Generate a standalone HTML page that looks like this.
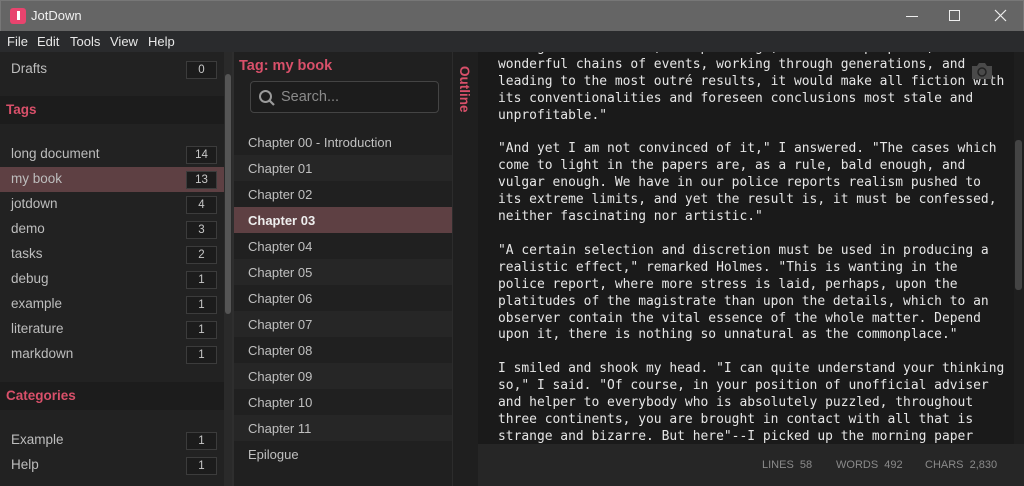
<!DOCTYPE html>
<html><head><style>
*{margin:0;padding:0;box-sizing:border-box}
body{width:1024px;height:486px;overflow:hidden;background:#1b1b1b;font-family:"Liberation Sans","DejaVu Sans",sans-serif;position:relative;color:#c8c8c8}
.abs{position:absolute}
#title{left:0;top:0;width:1024px;height:31px;background:#656565;border:1px solid #777;border-bottom:none}
#menu{left:0;top:31px;width:1024px;height:21px;background:#2a2b2d;font-size:13px;color:#e8e8e8}
#menu span{position:absolute;top:3px}
#left{left:0;top:52px;width:232px;height:434px;background:#222222}
.row{position:absolute;left:0;width:224px;height:25px;font-size:13.5px;color:#bdbdbd}
.row .t{position:absolute;left:11px;top:4px}
.row .b{position:absolute;left:186px;top:4px;width:31px;height:18px;border:1px solid #3c3c3c;background:#1c1c1c;font-size:11.5px;text-align:center;line-height:16px;color:#c8c8c8}
.hdr{position:absolute;left:0;width:224px;height:28px;background:#1c1c1c;color:#d9506a;font-weight:bold;font-size:13.5px;padding:6px 0 0 6px}
#mid{left:232px;top:52px;width:220px;height:434px;background:#202020;border-left:2px solid #2e2e2e}
.ch{position:absolute;left:0;width:218px;height:26px;font-size:13px;color:#c0c0c0;padding:6px 0 0 14px}
#outline{left:452px;top:52px;width:26px;height:434px;background:#1f1f1f;border-left:1px solid #2c2c2c}
#ed{left:478px;top:52px;width:546px;height:392px;background:#1a1a1a;overflow:hidden}
#txt{position:absolute;left:20px;top:-12px;font-family:"DejaVu Sans Mono",monospace;font-size:12.95px;line-height:16.9px;color:#e6e6e6;white-space:pre}
#status{left:478px;top:444px;width:546px;height:42px;background:#262626;font-size:11px;color:#8a8a8a}
</style></head><body>
<div id="title" class="abs">
 <div class="abs" style="left:9px;top:7px;width:16px;height:16px;background:#e8446e;border-radius:3px"><div class="abs" style="left:7px;top:3px;width:3px;height:9px;background:#fff"></div></div>
 <div class="abs" style="left:30px;top:7px;font-size:13px;color:#f0f0f0">JotDown</div>
 <div class="abs" style="left:905px;top:15px;width:12px;height:1px;background:#eee"></div>
 <div class="abs" style="left:948px;top:9px;width:11px;height:11px;border:1px solid #eee"></div>
 <svg class="abs" style="left:993px;top:8px" width="13" height="13"><path d="M1 1L12 12M12 1L1 12" stroke="#eee" stroke-width="1.2"/></svg>
</div>
<div id="menu" class="abs"><span style="left:7px">File</span><span style="left:37px">Edit</span><span style="left:70px">Tools</span><span style="left:110px">View</span><span style="left:148px">Help</span></div>
<div id="left" class="abs">
 <div class="row" style="top:5px"><span class="t">Drafts</span><span class="b">0</span></div>
 <div class="hdr" style="top:44px">Tags</div>
 <div class="row" style="top:90px"><span class="t">long document</span><span class="b">14</span></div>
 <div class="row" style="top:115px;background:#5e4043"><span class="t">my book</span><span class="b">13</span></div>
 <div class="row" style="top:140px"><span class="t">jotdown</span><span class="b">4</span></div>
 <div class="row" style="top:165px"><span class="t">demo</span><span class="b">3</span></div>
 <div class="row" style="top:190px"><span class="t">tasks</span><span class="b">2</span></div>
 <div class="row" style="top:215px"><span class="t">debug</span><span class="b">1</span></div>
 <div class="row" style="top:240px"><span class="t">example</span><span class="b">1</span></div>
 <div class="row" style="top:265px"><span class="t">literature</span><span class="b">1</span></div>
 <div class="row" style="top:290px"><span class="t">markdown</span><span class="b">1</span></div>
 <div class="hdr" style="top:330px">Categories</div>
 <div class="row" style="top:376px"><span class="t">Example</span><span class="b">1</span></div>
 <div class="row" style="top:401px"><span class="t">Help</span><span class="b">1</span></div>
 <div class="abs" style="left:224px;top:0;width:8px;height:434px;background:#2a2a2a"></div>
 <div class="abs" style="left:225px;top:22px;width:6px;height:240px;background:#555;border-radius:3px"></div>
</div>
<div id="mid" class="abs">
 <div class="abs" style="left:5px;top:6px;color:#d9506a;font-weight:bold;font-size:14.5px">Tag: my book</div>
 <div class="abs" style="left:16px;top:29px;width:189px;height:32px;border:1px solid #444;border-radius:4px;background:#1c1c1c">
  <svg class="abs" style="left:7px;top:7px" width="18" height="18"><circle cx="7.5" cy="7.5" r="5.5" stroke="#9a9a9a" stroke-width="2" fill="none"/><path d="M11.5 11.5L16 16" stroke="#9a9a9a" stroke-width="2.2"/></svg>
  <span class="abs" style="left:30px;top:7px;font-size:14.5px;color:#8a8a8a">Search...</span>
 </div>
 <div class="ch" style="top:77px">Chapter 00 - Introduction</div>
 <div class="ch" style="top:103px;background:#262626">Chapter 01</div>
 <div class="ch" style="top:129px">Chapter 02</div>
 <div class="ch" style="top:155px;background:#5e4043;color:#eee;font-weight:bold">Chapter 03</div>
 <div class="ch" style="top:181px">Chapter 04</div>
 <div class="ch" style="top:207px;background:#262626">Chapter 05</div>
 <div class="ch" style="top:233px">Chapter 06</div>
 <div class="ch" style="top:259px;background:#262626">Chapter 07</div>
 <div class="ch" style="top:285px">Chapter 08</div>
 <div class="ch" style="top:311px;background:#262626">Chapter 09</div>
 <div class="ch" style="top:337px">Chapter 10</div>
 <div class="ch" style="top:363px;background:#262626">Chapter 11</div>
 <div class="ch" style="top:389px">Epilogue</div>
</div>
<div id="outline" class="abs"><div class="abs" style="left:4px;top:14px;writing-mode:vertical-rl;color:#d9506a;font-weight:bold;font-size:13.5px">Outline</div></div>
<div id="ed" class="abs">
<div id="txt">strange coincidences, the plannings, the cross-purposes, the
wonderful chains of events, working through generations, and
leading to the most outré results, it would make all fiction with
its conventionalities and foreseen conclusions most stale and
unprofitable."

"And yet I am not convinced of it," I answered. "The cases which
come to light in the papers are, as a rule, bald enough, and
vulgar enough. We have in our police reports realism pushed to
its extreme limits, and yet the result is, it must be confessed,
neither fascinating nor artistic."

"A certain selection and discretion must be used in producing a
realistic effect," remarked Holmes. "This is wanting in the
police report, where more stress is laid, perhaps, upon the
platitudes of the magistrate than upon the details, which to an
observer contain the vital essence of the whole matter. Depend
upon it, there is nothing so unnatural as the commonplace."

I smiled and shook my head. "I can quite understand your thinking
so," I said. "Of course, in your position of unofficial adviser
and helper to everybody who is absolutely puzzled, throughout
three continents, you are brought in contact with all that is
strange and bizarre. But here"--I picked up the morning paper</div>
 <svg class="abs" style="left:492px;top:9px" width="24" height="20"><path d="M2 5h5l2-3h6l2 3h5v13H2z" fill="#4a4a4a"/><circle cx="12" cy="11" r="4" stroke="#222" stroke-width="1.5" fill="none"/></svg>
 <div class="abs" style="left:536px;top:0;width:10px;height:392px;background:#1e1e1e"></div>
 <div class="abs" style="left:537px;top:88px;width:7px;height:150px;background:#444;border-radius:3px"></div>
</div>
<div id="status" class="abs">
 <span class="abs" style="left:284px;top:15px">LINES&nbsp; 58</span>
 <span class="abs" style="left:358px;top:15px">WORDS&nbsp; 492</span>
 <span class="abs" style="left:447px;top:15px">CHARS&nbsp; 2,830</span>
</div>
</body></html>
